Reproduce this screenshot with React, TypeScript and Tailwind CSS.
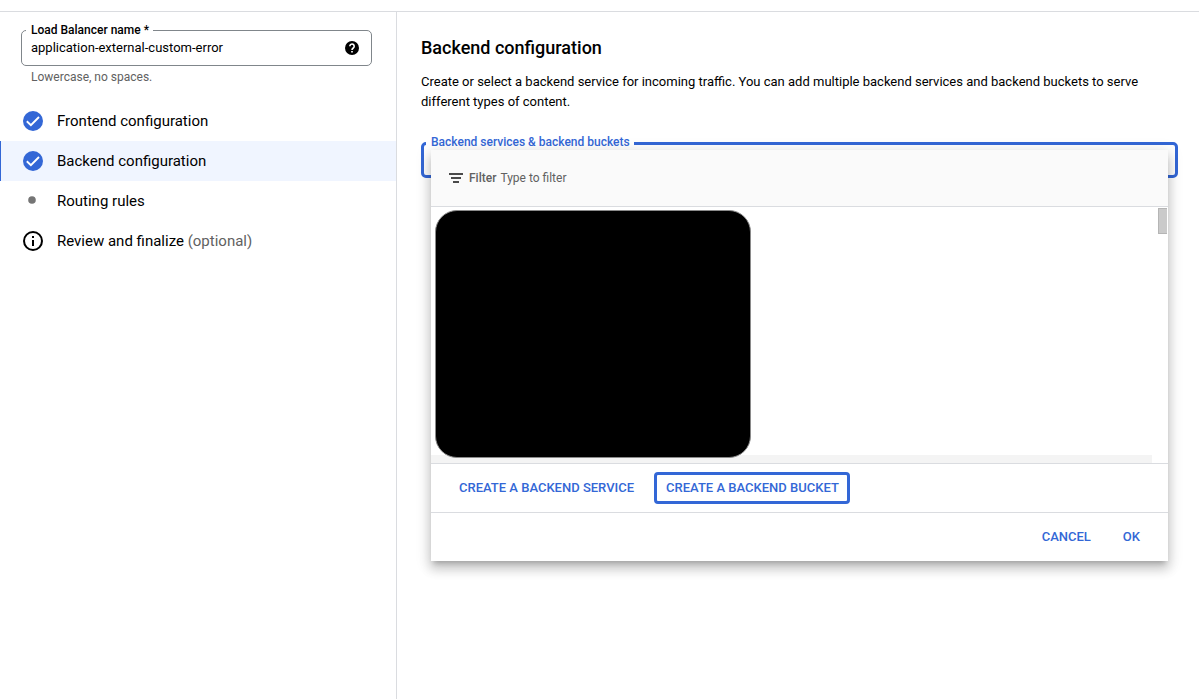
function HelpIcon() {
  return (
    <svg viewBox="0 0 20 20" className="size-[14px]" aria-hidden="true">
      <circle cx="10" cy="10" r="10" fill="#000" />
      <path
        d="M6.9 7.4a3.1 3.1 0 1 1 4.9 2.6c-1.1.8-1.8 1.4-1.8 2.7"
        fill="none"
        stroke="#fff"
        strokeWidth="2.3"
      />
      <path d="M8.8 14.2h2.4v2.4H8.8z" fill="#fff" />
    </svg>
  );
}

function FilterIcon() {
  return (
    <svg viewBox="0 0 14 10" className="h-[10px] w-[14px]" aria-hidden="true">
      <path d="M0 0h14v2H0zM2 4h10v2H2zM4 8h6v2H4z" fill="#4a4a4a" />
    </svg>
  );
}

function CheckIcon() {
  return (
    <svg viewBox="0 0 20 20" className="size-5" aria-hidden="true">
      <circle cx="10" cy="10" r="10" fill="#3367d6" />
      <path d="M3.8 10.2 7.9 14.2 16 6" fill="none" stroke="#fff" strokeWidth="1.9" />
    </svg>
  );
}

function DotIcon() {
  return (
    <svg viewBox="0 0 20 20" className="size-5" aria-hidden="true">
      <circle cx="9" cy="9" r="3.8" fill="#757575" />
    </svg>
  );
}

function InfoIcon() {
  return (
    <svg viewBox="0 0 20 20" className="size-5" aria-hidden="true">
      <circle cx="10" cy="10" r="9" fill="none" stroke="#000" strokeWidth="2" />
      <path d="M9 5h2v2H9zM9 9h2v6H9z" fill="#000" />
    </svg>
  );
}

const steps = [
  { label: "Frontend configuration", icon: <CheckIcon /> },
  { label: "Backend configuration", icon: <CheckIcon />, active: true },
  { label: "Routing rules", icon: <DotIcon /> },
  { label: "Review and finalize", note: "(optional)", icon: <InfoIcon /> },
];

function Sidebar() {
  return (
    <aside className="w-[397px] shrink-0 border-r border-[#dadce0]">
      <div className="pl-[21px] pr-6 pt-[11px]">
        <fieldset className="h-[43px] rounded-[5px] border border-[#80868b] px-1">
          <legend className="pl-[5px] pr-1 text-xs leading-[14px] font-medium">
            <label htmlFor="lb-name">Load Balancer name *</label>
          </legend>
          <div className="flex h-[22px] items-center pl-[5px] pr-2">
            <input
              id="lb-name"
              className="min-w-0 flex-1 text-[13px] leading-5 outline-none"
              defaultValue="application-external-custom-error"
            />
            <button type="button" aria-label="Help">
              <HelpIcon />
            </button>
          </div>
        </fieldset>
        <p className="pl-[10px] pt-[3px] text-xs leading-4 text-[#616161]">Lowercase, no spaces.</p>
      </div>
      <nav className="pt-4">
        {steps.map((s) => (
          <a
            key={s.label}
            href="#"
            className={
              s.active
                ? "flex h-10 items-center gap-[14px] border-l border-[#3367d6] bg-[#f0f5ff] pl-[22px] text-[15px]"
                : "flex h-10 items-center gap-[14px] border-l border-transparent pl-[22px] text-[15px]"
            }
          >
            {s.icon}
            <span>
              {s.label}
              {s.note && <span className="text-[#616161]"> {s.note}</span>}
            </span>
          </a>
        ))}
      </nav>
    </aside>
  );
}

function BackendMenu() {
  return (
    <div className="absolute inset-x-[10px] top-[15px] bg-white shadow-[0_5px_5px_-3px_rgba(0,0,0,0.2),0_8px_10px_1px_rgba(0,0,0,0.14),0_3px_14px_2px_rgba(0,0,0,0.12)]">
      <div className="flex h-[57px] items-center border-b border-[#dadce0] bg-[#fafafa] pl-[18px] text-xs text-[#616161]">
        <FilterIcon />
        <label htmlFor="filter" className="pl-[6px] font-medium">
          Filter
        </label>
        <input
          id="filter"
          placeholder="Type to filter"
          className="min-w-0 flex-1 pl-1 outline-none placeholder:text-[#616161]"
        />
      </div>
      <div className="flex h-64 items-start justify-between">
        <div className="flex h-full flex-1 flex-col">
          <div className="h-[248px] pl-1 pt-[3px]">
            <div className="relative h-[248px] w-[316px] rounded-[22px] border border-[#8a8a8a] bg-black" />
          </div>
          <div className="h-2 bg-[#f4f4f4]" />
        </div>
        <div className="flex w-4 justify-end pr-px pt-px">
          <div className="h-[26px] w-[9px] border border-r-0 border-[#b5b5b5] bg-[#cacaca]" />
        </div>
      </div>
      <div className="flex h-[50px] items-center gap-2 border-y border-[#dadce0] px-4 text-[13px] font-medium text-[#3367d6]">
        <button type="button" className="h-8 px-3">
          CREATE A BACKEND SERVICE
        </button>
        <button type="button" className="h-8 rounded border-3 border-[#3367d6] pl-[9px] pr-2">
          CREATE A BACKEND BUCKET
        </button>
      </div>
      <div className="flex h-12 items-center justify-end gap-2 px-4 text-[13px] font-medium text-[#3367d6]">
        <button type="button" className="h-8 px-3">
          CANCEL
        </button>
        <button type="button" className="h-8 px-3">
          OK
        </button>
      </div>
    </div>
  );
}

export default function App() {
  return (
    <div className="flex min-h-screen flex-col bg-white pt-[11px] font-[Roboto,sans-serif] text-black">
      <div className="flex flex-1 border-t border-[#dadce0]">
        <Sidebar />
        <main className="min-w-0 flex-1 pl-6 pr-[21px] pt-6">
          <h1 className="text-lg leading-6 font-medium">Backend configuration</h1>
          <p className="pt-3 text-[13px] leading-5">
            Create or select a backend service for incoming traffic. You can add multiple backend
            services and backend buckets to serve different types of content.
          </p>
          <div className="relative mt-[23px]">
            <fieldset className="h-[43px] rounded-[5px] border-3 border-[#3367d6] px-[2px]">
              <legend className="pb-[2px] pl-[5px] pr-1 text-xs leading-[14px] font-medium text-[#3367d6]">
                <label htmlFor="backends">Backend services &amp; backend buckets</label>
              </legend>
              <button
                id="backends"
                type="button"
                aria-haspopup="dialog"
                aria-expanded="true"
                className="block h-6 w-full"
              />
            </fieldset>
            <BackendMenu />
          </div>
        </main>
      </div>
    </div>
  );
}
